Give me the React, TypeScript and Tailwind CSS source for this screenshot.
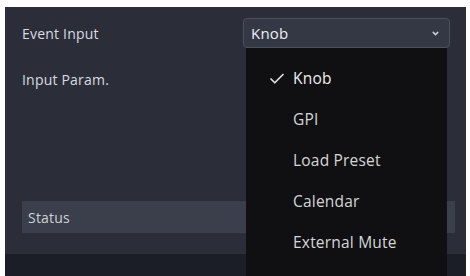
import { Check, ChevronDown } from "lucide-react";

const options = ["Knob", "GPI", "Load Preset", "Calendar", "External Mute"];

export default function App() {
  const selected = "Knob";

  return (
    <div className="relative h-[276px] w-[470px] overflow-hidden bg-white pl-[5px] pr-[4px] pt-[7px] font-['Open_Sans',sans-serif] font-medium">
      <div className="flex h-full flex-col bg-[#2b2e39] text-[14px] tracking-[0.2px] text-[#d9dbe0]">
        <div className="mt-[11px] flex h-[30px] items-center pl-[17px] pr-[16px]">
          <span>Event Input</span>
          <div className="ml-auto flex h-[30px] w-[207px] items-center justify-between rounded-[4px] border border-[#4b505d] bg-[#343844] pl-[7px] pr-[9px] text-[15px] text-[#eceef2]">
            <span>{selected}</span>
            <ChevronDown size={9} strokeWidth={4} className="text-[#c9ccd3]" />
          </div>
        </div>

        <div className="mt-[21px] pl-[17px]">Input Param.</div>

        <div className="mt-[111px] ml-[17px] mr-[11px] flex h-[32px] items-center bg-[#3b3f4b] pl-[6px] text-[#cfd1d6]">
          Status
        </div>

        <div className="mt-auto h-[22px] bg-[#1b1d27]" />
      </div>

      {/* open dropdown list */}
      <div className="absolute left-[246px] top-[48px] h-[240px] w-[201px] bg-[#101012] pt-[10px] text-[15.5px] tracking-[0.2px] text-[#d6d6d8]">
        {options.map((o) => (
          <div key={o} className="flex h-[41px] items-center">
            <span className="flex w-[47px] justify-end pr-[7px]">
              {o === selected && <Check size={18} strokeWidth={2.2} className="text-[#e4e4e6]" />}
            </span>
            <span className={o === selected ? "text-[#eeeeef]" : ""}>{o}</span>
          </div>
        ))}
      </div>
    </div>
  );
}
